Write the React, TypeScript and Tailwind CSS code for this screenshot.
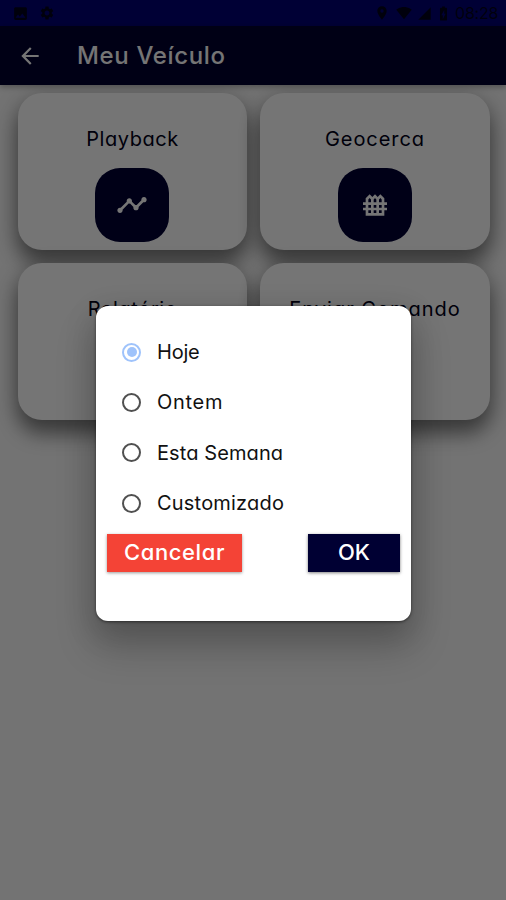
import React from "react";
import {
  MdArrowBack,
  MdBatteryChargingFull,
  MdFence,
  MdImage,
  MdLocationOn,
  MdSettings,
  MdSignalCellular4Bar,
  MdSignalWifi4Bar,
  MdTimeline,
} from "react-icons/md";

function StatusBar() {
  return (
    <div className="flex h-[26px] shrink-0 items-center justify-between bg-[#000075] pr-[7px] pl-3 text-[#00001c]">
      <div className="flex items-center gap-2.5">
        <MdImage size={17} />
        <MdSettings size={16} />
      </div>
      <div className="flex items-center">
        <MdLocationOn size={16} />
        <MdSignalWifi4Bar size={16} className="ml-[6px]" />
        <MdSignalCellular4Bar size={15} className="ml-[5px]" />
        <MdBatteryChargingFull size={17} className="ml-[3px]" />
        <span className="ml-[3px] w-[44px] text-[16px] leading-none tracking-[-0.2px]">08:28</span>
      </div>
    </div>
  );
}

function AppBar() {
  return (
    <header className="z-10 flex h-[59px] shrink-0 items-center bg-[#00002e] pl-[17px] text-white shadow-[0_2px_6px_rgba(0,0,0,0.3)]">
      <MdArrowBack size={26} />
      <h1 className="ml-[34px] text-[24px] leading-none font-medium tracking-[0.65px]">Meu Veículo</h1>
    </header>
  );
}

type CardProps = { title: string; spacing: string; icon?: React.ReactNode };

function Card({ title, spacing, icon }: CardProps) {
  return (
    <div className="flex h-[157px] flex-col items-center rounded-[24px] bg-white pt-[33px] shadow-[0_14px_20px_rgba(0,0,0,0.42),0_4px_24px_rgba(0,0,0,0.22)]">
      <span className={`text-[20px] leading-[26px] whitespace-nowrap text-[#000018] ${spacing}`}>{title}</span>
      {icon && (
        <div className="mt-[16px] mr-px flex size-[74px] items-center justify-center rounded-[25px] bg-[#000033] text-white">
          {icon}
        </div>
      )}
    </div>
  );
}

function Option({ label, spacing, checked = false }: { label: string; spacing: string; checked?: boolean }) {
  return (
    <label className="flex h-[50.3px] items-center gap-[16px]">
      <span
        className={`flex size-[19px] items-center justify-center rounded-full border-2 ${
          checked ? "border-[#9fc3fb]" : "border-[#505050]"
        }`}
      >
        {checked && <span className="size-[10px] rounded-full bg-[#9fc3fb]" />}
      </span>
      <span className={`text-[20px] leading-none text-[#111111] ${spacing}`}>{label}</span>
    </label>
  );
}

function PeriodDialog() {
  return (
    <div className="ml-px h-[315px] w-[315px] rounded-[12px] bg-white px-[11px] pt-[21px] shadow-[0_24px_38px_3px_rgba(0,0,0,0.2),0_9px_30px_4px_rgba(0,0,0,0.12),0_1px_3px_rgba(0,0,0,0.5)]">
      <div className="flex flex-col pl-[15px]">
        <Option label="Hoje" spacing="tracking-[-0.2px]" checked />
        <Option label="Ontem" spacing="tracking-[0.7px]" />
        <Option label="Esta Semana" spacing="tracking-[0.1px]" />
        <Option label="Customizado" spacing="tracking-[0.2px]" />
      </div>
      <div className="mt-[6px] flex justify-between text-white">
        <button className="h-[38px] w-[135px] bg-[#f44336] pb-[3px] text-[22px] leading-none font-medium tracking-[0.6px] shadow-[0_1px_3px_rgba(0,0,0,0.4)]">
          Cancelar
        </button>
        <button className="h-[38px] w-[92px] bg-[#000033] pb-[3px] text-[22px] leading-none font-medium shadow-[0_1px_3px_rgba(0,0,0,0.5)]">
          OK
        </button>
      </div>
    </div>
  );
}

export default function App() {
  return (
    <div className="relative flex h-[900px] w-[506px] flex-col overflow-hidden bg-[#fafafa] font-['Inter',sans-serif] [font-feature-settings:'cv11']">
      <StatusBar />
      <AppBar />
      <main className="grid grid-cols-[229px_230px] gap-[13px] pt-[8px] pl-[18px]">
        <Card title="Playback" spacing="tracking-[0.55px]" icon={<MdTimeline size={32} />} />
        <Card title="Geocerca" spacing="tracking-[0.95px]" icon={<MdFence size={32} />} />
        <Card title="Relatório" spacing="tracking-[0.6px]" />
        <Card title="Enviar Comando" spacing="tracking-[1px]" />
      </main>
      <div className="absolute inset-0 z-20 flex justify-center bg-black/54 pt-[306px]">
        <PeriodDialog />
      </div>
    </div>
  );
}
